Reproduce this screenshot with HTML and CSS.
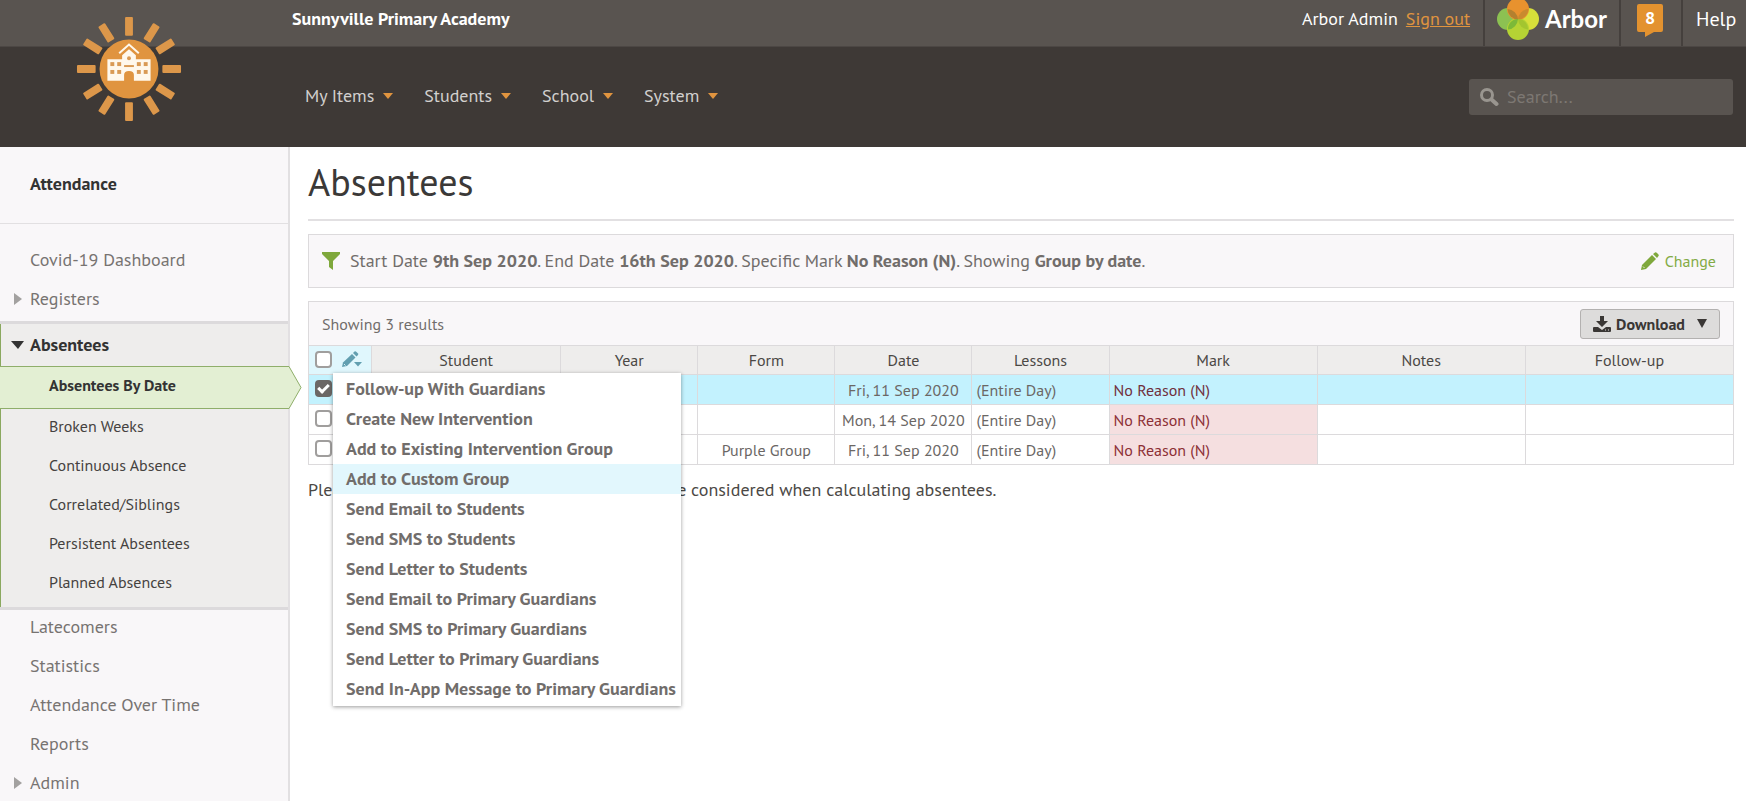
FILE: index.html
```html
<!DOCTYPE html>
<html lang="en">
<head>
  <meta charset="UTF-8">
  <meta name="viewport" content="width=device-width, initial-scale=1.0">
  <title>Absentees</title>
  <link rel="stylesheet" href="styles.css">
</head>
<body>
  <header class="header">
    <div class="topbar">
      <strong class="school-name">Sunnyville Primary Academy</strong>
      <div class="account">
        <span>Arbor Admin</span>
        <a class="sign-out" href="#">Sign out</a>
      </div>
      <a class="topbar-cell brand" href="#">
        <svg width="42" height="42" viewBox="0 0 42 42" aria-hidden="true">
          <circle cx="11" cy="20" r="11" fill="#8cc152"/>
          <circle cx="31" cy="20" r="11" fill="#d7df3a"/>
          <circle cx="21" cy="30" r="11" fill="#b5d334"/>
          <circle cx="21" cy="10" r="11" fill="#e8922e"/>
          <path d="M10.500 10A11 11 0 0 1 21 20.500A11 11 0 0 1 10.500 10Z" fill="#b3802f"/>
          <path d="M31.500 10A11 11 0 0 0 21 20.500A11 11 0 0 0 31.500 10Z" fill="#c98a2e"/>
          <path d="M21 20A10 10 0 0 0 11 30.500A11 11 0 0 0 21 20Z" fill="#7cb938"/>
          <path d="M21 20A10 10 0 0 1 31 30.500A11 11 0 0 1 21 20Z" fill="#a3c52f"/>
        </svg>
        <span>Arbor</span>
      </a>
      <a class="topbar-cell messages" href="#" aria-label="8 messages">
        <svg width="28" height="33" viewBox="0 0 28 33" aria-hidden="true">
          <path d="M3 0H25Q27 0 27 2V26Q27 28 25 28H18L9 33V28H3Q1 28 1 26V2Q1 0 3 0Z" fill="#e3922f"/>
        </svg>
        <span class="count">8</span>
      </a>
      <a class="topbar-cell help" href="#">Help</a>
    </div>

    <div class="navbar">
      <nav class="nav">
        <a href="#">My Items <i class="caret"></i></a>
        <a href="#">Students <i class="caret"></i></a>
        <a href="#">School <i class="caret"></i></a>
        <a href="#">System <i class="caret"></i></a>
      </nav>
      <label class="search">
        <svg width="20" height="20" viewBox="0 0 20 20" aria-hidden="true">
          <circle cx="8" cy="8" r="5.500" fill="none" stroke="#99958f" stroke-width="3"/>
          <path d="M12.500 12.500L17.500 17" stroke="#99958f" stroke-width="4" stroke-linecap="round"/>
        </svg>
        <input type="search" placeholder="Search..." aria-label="Search">
      </label>
    </div>

    <a class="logo" href="#" aria-label="Home">
      <svg width="106" height="106" viewBox="-54 -54 108 108" aria-hidden="true">
        <circle r="30" fill="#e0943f"/>
        <g fill="#dc974a">
          <rect x="-4" y="-53" width="8" height="19" rx="1"/>
          <rect x="-4" y="-53" width="8" height="19" rx="1" transform="rotate(32)"/>
          <rect x="-4" y="-53" width="8" height="19" rx="1" transform="rotate(58)"/>
          <rect x="-4" y="-53" width="8" height="19" rx="1" transform="rotate(90)"/>
          <rect x="-4" y="-53" width="8" height="19" rx="1" transform="rotate(122)"/>
          <rect x="-4" y="-53" width="8" height="19" rx="1" transform="rotate(148)"/>
          <rect x="-4" y="-53" width="8" height="19" rx="1" transform="rotate(180)"/>
          <rect x="-4" y="-53" width="8" height="19" rx="1" transform="rotate(212)"/>
          <rect x="-4" y="-53" width="8" height="19" rx="1" transform="rotate(238)"/>
          <rect x="-4" y="-53" width="8" height="19" rx="1" transform="rotate(270)"/>
          <rect x="-4" y="-53" width="8" height="19" rx="1" transform="rotate(302)"/>
          <rect x="-4" y="-53" width="8" height="19" rx="1" transform="rotate(328)"/>
        </g>
        <!-- school building -->
        <path d="M-22 -10H-7V-14L0 -20L7 -14V-10H22V12H5V6Q5 2 0 2Q-5 2 -5 6V12H-22Z" fill="#fff8ec"/>
        <path d="M-10 -16L0 -25L10 -16" fill="none" stroke="#fff8ec" stroke-width="2"/>
        <g fill="#d99a55">
          <circle cy="-11" r="2"/>
          <rect x="-5" y="-4" width="10" height="2"/>
          <rect x="-19" y="-7" width="4" height="4"/><rect x="-12" y="-7" width="4" height="4"/>
          <rect x="-19" y="1" width="4" height="4"/><rect x="-12" y="1" width="4" height="4"/>
          <rect x="8" y="-7" width="4" height="4"/><rect x="15" y="-7" width="4" height="4"/>
          <rect x="8" y="1" width="4" height="4"/><rect x="15" y="1" width="4" height="4"/>
        </g>
      </svg>
    </a>
  </header>

  <div class="layout">
    <aside class="sidebar">
      <h2 class="sidebar-title">Attendance</h2>
      <ul class="side-nav">
        <li><a href="#">Covid-19 Dashboard</a></li>
        <li class="closed"><a href="#">Registers</a></li>
        <li class="group">
          <a class="group-title" href="#">Absentees</a>
          <ul>
            <li class="active">
              <a href="#">Absentees By Date</a>
              <svg class="pointer" width="14" height="43" viewBox="0 0 14 43" aria-hidden="true">
                <path d="M0 0H1L13 21.500L1 43H0Z" fill="#e3efd3"/>
                <path d="M0 0.500H1L13 21.500L1 42.500H0" fill="none" stroke="#8fae6a"/>
              </svg>
            </li>
            <li><a href="#">Broken Weeks</a></li>
            <li><a href="#">Continuous Absence</a></li>
            <li><a href="#">Correlated/Siblings</a></li>
            <li><a href="#">Persistent Absentees</a></li>
            <li><a href="#">Planned Absences</a></li>
          </ul>
        </li>
        <li><a href="#">Latecomers</a></li>
        <li><a href="#">Statistics</a></li>
        <li><a href="#">Attendance Over Time</a></li>
        <li><a href="#">Reports</a></li>
        <li class="closed"><a href="#">Admin</a></li>
      </ul>
    </aside>

    <main class="main">
      <h1>Absentees</h1>

      <div class="filter">
        <svg width="18" height="18" viewBox="0 0 18 18" aria-hidden="true">
          <path d="M0 0H18V2L11 9V18L7 15V9L0 2Z" fill="#7fa83c"/>
        </svg>
        <p>Start Date <b>9th Sep 2020</b>. End Date <b>16th Sep 2020</b>. Specific Mark <b>No Reason (N)</b>. Showing <b>Group by date</b>.</p>
        <a class="change" href="#">
          <svg width="18" height="18" viewBox="0 0 18 18" aria-hidden="true">
            <path d="M12 2L14 0.500Q15 0 16 1L17.500 2.500Q18 3.500 17.500 4L16 6Z" fill="#7fa83c"/>
            <path d="M11 3L15 7L5 17L0 18L1 13Z" fill="#7fa83c"/>
            <path d="M2 14.500L3.500 16" stroke="#e9f0df" fill="none"/>
          </svg>
          Change
        </a>
      </div>

      <section class="results">
        <div class="results-bar">
          <span>Showing 3 results</span>
          <button class="download" type="button">
            <svg width="18" height="16" viewBox="0 0 18 16" aria-hidden="true">
              <path d="M7 0H11V5H15L9 11L3 5H7Z" fill="#3a3735"/>
              <path d="M1 11H5L9 14L13 11H17Q18 11 18 12V15Q18 16 17 16H1Q0 16 0 15V12Q0 11 1 11Z" fill="#3a3735"/>
              <path d="M12 14H13M15 14H16" stroke="#dddcdb"/>
            </svg>
            Download
            <i class="caret"></i>
          </button>
        </div>

        <table class="table">
          <colgroup>
            <col class="col-select"><col class="col-student"><col class="col-sm"><col class="col-sm"><col class="col-sm"><col class="col-sm"><col class="col-lg"><col class="col-lg"><col class="col-lg">
          </colgroup>
          <thead>
            <tr>
              <th class="select">
                <div class="tools">
                  <input type="checkbox" aria-label="Select all">
                  <button class="edit" type="button" aria-label="Bulk actions">
                    <svg width="20" height="17" viewBox="0 0 20 17" aria-hidden="true">
                      <path d="M11 2L12.500 0.500Q13.500 0 14.500 1L16 2.500Q16.500 3.500 16 4L14.500 5.500Z" fill="#629fb0"/>
                      <path d="M10 3L13.500 6.500L5 15L0 16L1 11.500Z" fill="#629fb0"/>
                      <path d="M2 13L3.500 14.500" stroke="#d5f2f8" fill="none"/>
                      <path d="M12 11H20L16 15.500Z" fill="#629fb0"/>
                    </svg>
                  </button>
                  <ul class="menu">
                    <li><a href="#">Follow-up With Guardians</a></li>
                    <li><a href="#">Create New Intervention</a></li>
                    <li><a href="#">Add to Existing Intervention Group</a></li>
                    <li><a class="hover" href="#">Add to Custom Group</a></li>
                    <li><a href="#">Send Email to Students</a></li>
                    <li><a href="#">Send SMS to Students</a></li>
                    <li><a href="#">Send Letter to Students</a></li>
                    <li><a href="#">Send Email to Primary Guardians</a></li>
                    <li><a href="#">Send SMS to Primary Guardians</a></li>
                    <li><a href="#">Send Letter to Primary Guardians</a></li>
                    <li><a href="#">Send In-App Message to Primary Guardians</a></li>
                  </ul>
                </div>
              </th>
              <th>Student</th>
              <th>Year</th>
              <th>Form</th>
              <th>Date</th>
              <th>Lessons</th>
              <th>Mark</th>
              <th>Notes</th>
              <th>Follow-up</th>
            </tr>
          </thead>
          <tbody>
            <tr class="selected">
              <td class="select"><input type="checkbox" aria-label="Select row 1" checked></td>
              <td></td><td></td><td></td>
              <td>Fri, 11 Sep 2020</td>
              <td class="left">(Entire Day)</td>
              <td class="left mark">No Reason (N)</td>
              <td></td><td></td>
            </tr>
            <tr>
              <td class="select"><input type="checkbox" aria-label="Select row 2"></td>
              <td></td><td></td><td></td>
              <td>Mon, 14 Sep 2020</td>
              <td class="left">(Entire Day)</td>
              <td class="left mark">No Reason (N)</td>
              <td></td><td></td>
            </tr>
            <tr>
              <td class="select"><input type="checkbox" aria-label="Select row 3"></td>
              <td></td><td></td>
              <td>Purple Group</td>
              <td>Fri, 11 Sep 2020</td>
              <td class="left">(Entire Day)</td>
              <td class="left mark">No Reason (N)</td>
              <td></td><td></td>
            </tr>
          </tbody>
        </table>
      </section>

      <p class="note">Please note that only statutory roll call marks are considered when calculating absentees.</p>
    </main>
  </div>
</body>
</html>
```
FILE: styles.css
```css
*, *::before { margin: 0; padding: 0; box-sizing: border-box; }

body {
  min-height: 100vh;
  display: flex;
  flex-direction: column;
  font-family: "PT Sans", Lato, "Noto Sans", sans-serif;
  font-size: 18px;
  line-height: 24px;
  color: #4b4845;
  background: #fff;
}

a { color: inherit; text-decoration: none; }
ul { list-style: none; }
svg { display: block; flex: none; }
button, input { font: inherit; color: inherit; }

/* header */
.header {
  position: relative;
  background: #3e3936;
  color: #fff;
}

.topbar {
  display: flex;
  height: 47px;
  padding-left: 292px;
  background: #595450;
  border-bottom: 1px solid #4c4744;
  line-height: 38px;
}

.school-name { flex: 1; }

.account {
  display: flex;
  gap: 8px;
  margin-right: 13px;
}

.sign-out {
  color: #e0943f;
  text-decoration: underline;
}

.topbar-cell {
  border-left: 2px solid #45403d;
}

.brand {
  display: flex;
  gap: 6px;
  width: 136px;
  padding-left: 12px;
  font-family: Lato, sans-serif;
  font-size: 24px;
  font-weight: bold;
}

.brand svg { margin-top: -1px; }

.messages {
  position: relative;
  width: 62px;
  padding: 4px 15px;
}

.count {
  position: absolute;
  top: 0;
  left: 15px;
  width: 28px;
  line-height: 36px;
  text-align: center;
  font-size: 18px;
  font-weight: bold;
}

.help {
  width: 65px;
  padding-left: 13px;
  font-size: 20px;
}

.navbar {
  display: flex;
  align-items: center;
  justify-content: space-between;
  height: 100px;
  padding: 0 13px 0 305px;
}

.nav {
  display: flex;
  gap: 31px;
  padding-bottom: 2px;
  color: #d2d0ce;
}

.nav a {
  display: flex;
  align-items: center;
  gap: 9px;
}

.caret {
  border: 5px solid transparent;
  border-top: 6px solid #e0943f;
  border-bottom: 0;
}

.search {
  display: flex;
  align-items: center;
  gap: 8px;
  width: 264px;
  height: 36px;
  padding: 0 10px;
  border-radius: 3px;
  background: #595450;
}

.search input {
  flex: 1;
  min-width: 0;
  border: 0;
  outline: 0;
  background: none;
}

.search input::placeholder { color: #7d7873; }

.logo {
  position: absolute;
  top: 16px;
  left: 76px;
}

/* sidebar */
.layout {
  flex: 1;
  display: flex;
}

.sidebar {
  width: 290px;
  flex: none;
  background: #f9f7f9;
  border-right: 2px solid #e2e0e2;
}

.sidebar-title {
  height: 77px;
  padding-left: 30px;
  border-bottom: 1px solid #e2e0e2;
  font-size: 18px;
  line-height: 74px;
  color: #333;
}

.side-nav {
  padding-top: 16px;
  color: #777371;
}

.side-nav a {
  display: block;
  padding-left: 30px;
  line-height: 39px;
}

.closed > a,
.side-nav .group-title {
  display: flex;
  align-items: center;
  gap: 8px;
  padding-left: 14px;
}

.closed > a::before {
  content: "";
  border: 6px solid transparent;
  border-left: 8px solid #a3a1a0;
  border-right: 0;
}

.group {
  margin: 3px 0 -3px;
  border-top: 3px solid #dcdadc;
  border-bottom: 3px solid #dcdadc;
  padding-bottom: 5px;
  background: #eeedec;
  box-shadow: inset 1px 0 #8aa85f;
  color: #454240;
}

.side-nav .group-title {
  gap: 6px;
  padding-left: 11px;
  line-height: 42px;
  font-weight: bold;
  color: #333;
}

.group-title::before {
  content: "";
  border: 6px solid transparent;
  border-width: 8px 6px 0 7px;
  border-top-color: #333;
}

.group ul { font-size: 16px; }
.group ul a { padding-left: 49px; }

.group .active {
  position: relative;
  height: 43px;
  margin-bottom: -2px;
  border-top: 1px solid #8fae6a;
  border-bottom: 1px solid #8fae6a;
  background: #e3efd3;
  font-weight: bold;
  color: #333;
}

.group .active a { line-height: 36px; }

.pointer {
  position: absolute;
  top: -1px;
  left: 100%;
}

/* main */
.main {
  flex: 1;
  min-width: 0;
  padding: 0 12px 0 18px;
}

.main h1 {
  height: 74px;
  margin-bottom: 13px;
  border-bottom: 2px solid #e2e0e2;
  font-size: 38px;
  font-weight: normal;
  line-height: 70px;
  color: #3b3938;
}

.filter {
  display: flex;
  align-items: center;
  gap: 10px;
  height: 54px;
  margin-bottom: 13px;
  padding: 0 17px 0 13px;
  border: 1px solid #dcdadc;
  background: #f9f7f9;
  color: #716d6b;
}

.filter p { flex: 1; }

.change {
  display: flex;
  align-items: center;
  gap: 6px;
  color: #83ab45;
  font-size: 16px;
}

.results-bar {
  display: flex;
  align-items: center;
  justify-content: space-between;
  height: 44px;
  padding: 0 13px;
  border: 1px solid #dcdadc;
  border-bottom: 0;
  background: #f9f7f9;
  color: #716d6b;
  font-size: 16px;
}

.download {
  display: flex;
  align-items: center;
  gap: 5px;
  height: 30px;
  padding: 0 12px;
  border: 1px solid #b3b1b0;
  border-radius: 3px;
  background: #dddcdb;
  color: #3a3735;
  font-weight: bold;
}

.download .caret {
  margin-left: 7px;
  border-top: 9px solid #3a3735;
}

.table {
  width: 100%;
  table-layout: fixed;
  border-collapse: collapse;
  font-size: 16px;
}

.col-select { width: 63px; }
.col-student { width: 189px; }
.col-sm { width: 137px; }
.col-lg { width: 208px; }

.table th,
.table td {
  height: 30px;
  border: 1px solid #dcdadc;
  line-height: 24px;
  text-align: center;
  white-space: nowrap;
}

.table th {
  height: 29px;
  background: #eeedec;
  font-weight: normal;
}

.table td { color: #6b6765; }
.table .left { padding-left: 4px; text-align: left; }

.table .mark {
  background: #f5dfe0;
  color: #8c2f35;
}

.table .select {
  padding: 0 0 2px 6px;
  text-align: left;
}

.table th.select { background: #e0f7fd; }

.table .selected td { background: #c3f2fe; }
.table .selected .mark { color: #6f2f3c; }

.tools {
  position: relative;
  display: flex;
  align-items: center;
  gap: 10px;
}

.edit {
  border: 0;
  background: none;
}

input[type="checkbox"] {
  display: block;
  width: 17px;
  height: 17px;
  appearance: none;
  border: 2px solid #a09e9d;
  border-radius: 4px;
  background: #fff;
}

input[type="checkbox"]:checked {
  border-color: #6b6765;
  background: #6b6765;
}

input[type="checkbox"]:checked::before {
  content: "";
  display: block;
  width: 7px;
  height: 11px;
  margin-left: 3px;
  border: solid #fff;
  border-width: 0 3px 3px 0;
  transform: rotate(45deg);
}

/* bulk actions menu, opens under the pencil */
.menu {
  position: absolute;
  top: 22px;
  left: 18px;
  z-index: 1;
  padding: 1px 0 2px;
  background: #fff;
  box-shadow: 0 1px 4px rgba(0, 0, 0, 0.4);
  font-size: 18px;
  font-weight: bold;
  color: #716d6b;
  text-align: left;
}

.menu a {
  display: block;
  padding: 0 5px 0 13px;
  line-height: 30px;
}

.menu .hover { background: #e2f7fd; }

.note { margin-top: 13px; }
```
